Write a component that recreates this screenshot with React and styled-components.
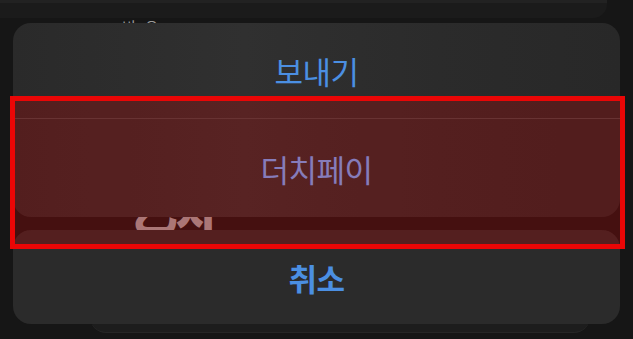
import styled, { createGlobalStyle } from "styled-components";

const GlobalStyle = createGlobalStyle`
  html, body {
    margin: 0;
    padding: 0;
    background: #161616;
  }
  body {
    font-family: "Noto Sans CJK KR", "Noto Sans", sans-serif;
  }
`;

const Screen = styled.div`
  position: relative;
  overflow: hidden;
  width: 633px;
  height: 339px;
  background: #161616;
`;

/* page content peeking out behind the sheet */
const Backdrop = styled.div`
  display: flex;
  flex-direction: column;
  height: 100%;
`;

const TopCard = styled.div`
  width: 607px;
  height: 18px;
  border-radius: 0 0 14px 0;
  background: #1b1b1b;
  border-top: 3px solid #222;
  box-sizing: border-box;
`;

const Caption = styled.div`
  margin: 0 0 0 122px;
  color: #9c9c9c;
  font-size: 15px;
  line-height: 18px;
  letter-spacing: 9px;
`;

const Sticker = styled.div`
  margin: 150px 0 0 132px;
  color: #a2a2a2;
  font-size: 46px;
  font-weight: 900;
  line-height: 50px;
  letter-spacing: -2px;
`;

const BottomCard = styled.div`
  margin: auto 43px 6px 90px;
  height: 20px;
  border-radius: 0 0 16px 16px;
  background: #1d1d1d;
  border-bottom: 1px solid #262626;
`;

const Sheet = styled.div`
  position: absolute;
  inset: 23px 13px 16px 13px;
  display: flex;
  flex-direction: column;
  gap: 13px;
`;

const Group = styled.div`
  display: flex;
  flex-direction: column;
  flex-shrink: 0;
  border-radius: 18px;
  overflow: hidden;
  background: linear-gradient(90deg, #2a2a2a 0%, #303030 38%, #2b2b2b 70%, #282828 100%);
`;

const Action = styled.div`
  display: flex;
  align-items: center;
  justify-content: center;
  height: ${(p) => p.$h}px;
  border-top: ${(p) => (p.$divider ? "1px solid #464646" : "none")};
  color: ${(p) => p.$color || "#4b8fe2"};
  font-size: 31px;
  font-weight: ${(p) => (p.$bold ? 600 : 400)};
  letter-spacing: -0.5px;
`;

const Cancel = styled(Group)`
  background: #2b2b2b;
`;

const Highlight = styled.div`
  position: absolute;
  left: 10px;
  top: 96px;
  width: 615px;
  height: 153px;
  box-sizing: border-box;
  border: 5px solid #ea0606;
  background: rgba(196, 0, 0, 0.27);
`;

export default function App() {
  return (
    <>
      <GlobalStyle />
      <Screen>
        <Backdrop>
          <TopCard />
          <Caption>비오</Caption>
          <Sticker>乙차</Sticker>
          <BottomCard />
        </Backdrop>
        <Sheet>
          <Group>
            <Action $h={95}>보내기</Action>
            <Action $h={98} $divider $color="#70abff">
              더치페이
            </Action>
          </Group>
          <Cancel>
            <Action $h={94} $bold>
              취소
            </Action>
          </Cancel>
        </Sheet>
        <Highlight />
      </Screen>
    </>
  );
}
